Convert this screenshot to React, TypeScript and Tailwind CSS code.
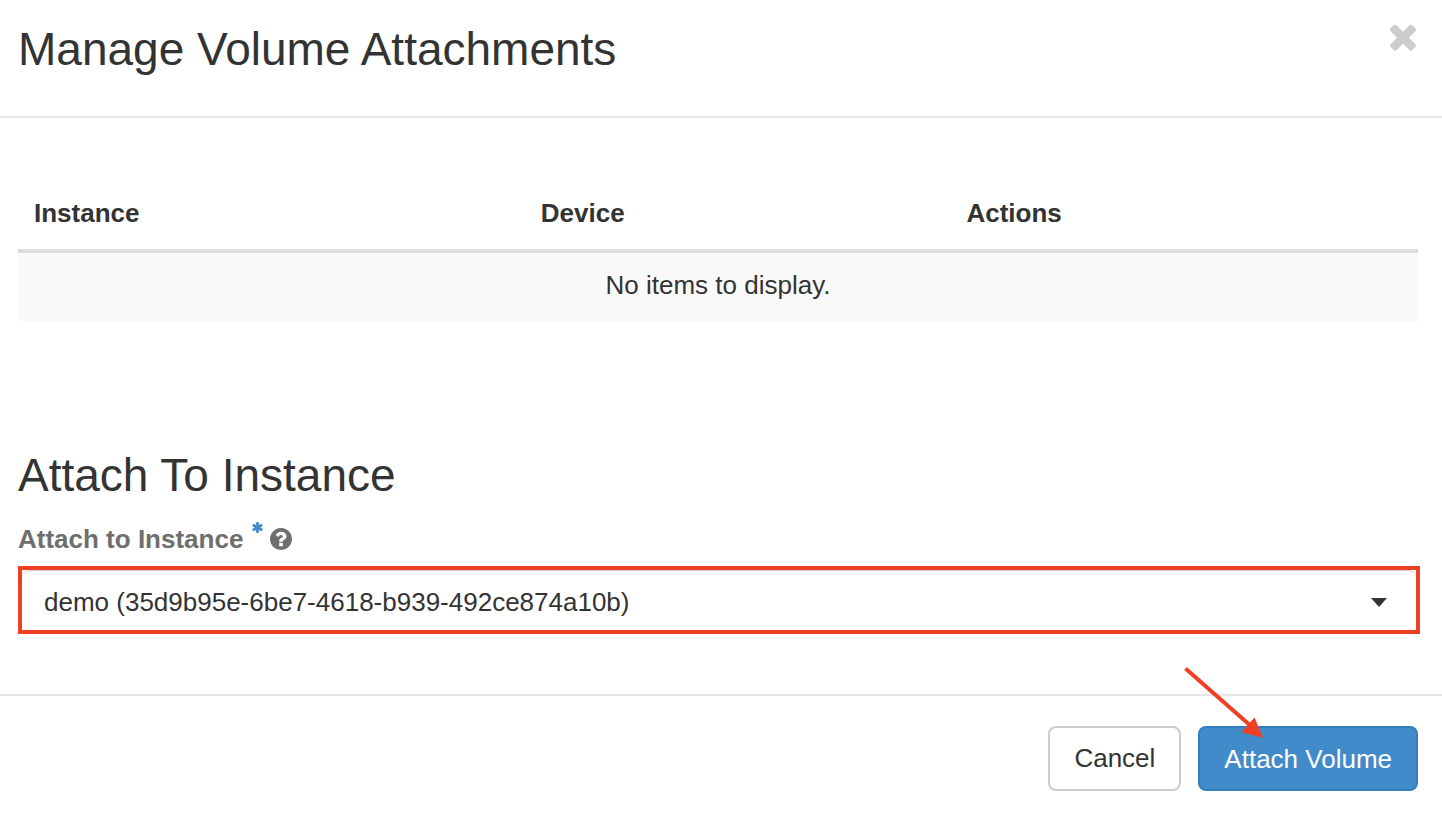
import { useState } from "react";

function CloseIcon() {
  return (
    <svg viewBox="302 302 1188 1252" className="h-7 w-[26px] fill-current" aria-hidden="true">
      <path d="M1490 1322q0 40-28 68l-136 136q-28 28-68 28t-68-28l-294-294-294 294q-28 28-68 28t-68-28l-136-136q-28-28-28-68t28-68l294-294-294-294q-28-28-28-68t28-68l136-136q28-28 68-28t68 28l294 294 294-294q28-28 68-28t68 28l136 136q28 28 28 68t-28 68l-294 294 294 294q28 28 28 68z" />
    </svg>
  );
}

function AsteriskIcon() {
  return (
    <svg viewBox="0 0 1792 1792" className="h-[13px] w-[13px] fill-[#428bca]" aria-hidden="true">
      <path d="M1546 1050q46 26 59.5 77.5t-12.5 97.5l-64 110q-26 46-77.5 59.5t-97.5-12.5l-266-153v307q0 52-38 90t-90 38h-128q-52 0-90-38t-38-90v-307l-266 153q-46 26-97.5 12.5t-77.5-59.5l-64-110q-26-46-12.5-97.5t59.5-77.5l266-154-266-154q-46-26-59.5-77.5t12.5-97.5l64-110q26-46 77.5-59.5t97.5 12.5l266 153v-307q0-52 38-90t90-38h128q52 0 90 38t38 90v307l266-153q46-26 97.5-12.5t77.5 59.5l64 110q26 46 12.5 97.5t-59.5 77.5l-266 154z" />
    </svg>
  );
}

function HelpIcon() {
  return (
    <svg viewBox="128 128 1536 1536" className="h-[22px] w-[22px] fill-[#6e6e6e]" aria-hidden="true">
      <path d="M1024 1376v-192q0-14-9-23t-23-9h-192q-14 0-23 9t-9 23v192q0 14 9 23t23 9h192q14 0 23-9t9-23zm256-672q0-88-55.5-163t-138.5-116-170.5-41q-243 0-371 213-15 24 8 42l132 100q7 6 19 6 16 0 25-12 53-68 86-92 34-24 86-24 48 0 85.5 26t37.5 59q0 38-20 61t-68 45q-63 28-115.5 86.5t-52.5 125.5v36q0 14 9 23t23 9h192q14 0 23-9t9-23q0-19 21.5-49.5t54.5-49.5q32-18 49-28.5t46-35 44.5-48 28-60.5 12.5-81zm384 192q0 209-103 385.5t-279.5 279.5-385.5 103-385.5-103-279.5-279.5-103-385.5 103-385.5 279.5-279.5 385.5-103 385.5 103 279.5 279.5 103 385.5z" />
    </svg>
  );
}

export default function App() {
  const [instance, setInstance] = useState("35d9b95e-6be7-4618-b939-492ce874a10b");

  return (
    <div className="min-h-screen bg-white font-['Liberation_Sans',Arial,sans-serif] text-[26px] leading-9 text-[#333]">
      <header className="flex items-start justify-between border-b-2 border-[#e5e5e5] pt-[23px] pr-[26px] pb-[41px] pl-[18px]">
        <h1 className="text-[46px] leading-[52px]">Manage Volume Attachments</h1>
        <button type="button" aria-label="Close" className="text-[#ccc]">
          <CloseIcon />
        </button>
      </header>

      <main>
        <div className="pt-[77px] pr-6 pl-[18px]">
          <table className="w-full table-fixed">
            <thead>
              <tr className="border-b-4 border-[#ddd] text-left">
                <th className="w-[36.2%] px-4 pb-[18px]">Instance</th>
                <th className="w-[30.4%] px-4 pb-[18px]">Device</th>
                <th className="px-4 pb-[18px]">Actions</th>
              </tr>
            </thead>
            <tbody>
              <tr className="bg-[#f9f9f9]">
                <td colSpan={3} className="px-4 pt-[14px] pb-[18px] text-center">
                  No items to display.
                </td>
              </tr>
            </tbody>
          </table>
        </div>

        <form className="pt-32 pr-[22px] pb-[60px] pl-[18px]">
          <h2 className="text-[46px] leading-[52px]">Attach To Instance</h2>
          <div className="mt-5 flex items-center">
            <label htmlFor="instance" className="flex items-center gap-2 font-bold text-[#6e6e6e]">
              Attach to Instance
              <span className="self-start">
                <AsteriskIcon />
              </span>
            </label>
            <span className="ml-1.5">
              <HelpIcon />
            </span>
          </div>
          <div className="relative mt-[9px] border-4 border-[#ee4023]">
            <select
              id="instance"
              value={instance}
              onChange={(e) => setInstance(e.target.value)}
              className="block h-[60px] w-full appearance-none rounded-t-lg border-t border-[#ccc] bg-white pt-0.5 pr-14 pl-[22px]"
            >
              <option value="35d9b95e-6be7-4618-b939-492ce874a10b">
                demo (35d9b95e-6be7-4618-b939-492ce874a10b)
              </option>
            </select>
            <svg
              viewBox="0 0 16 9"
              className="pointer-events-none absolute top-7 right-[29px] h-[9px] w-4 fill-[#333]"
              aria-hidden="true"
            >
              <path d="M0 0h16L8 9z" />
            </svg>
          </div>
        </form>
      </main>

      <footer className="flex justify-end gap-[17px] border-t-2 border-[#e5e5e5] pt-[30px] pr-6 pb-6 pl-[18px]">
        <button type="button" className="rounded-lg border-2 border-[#ccc] bg-white px-6 pt-3 pb-[13px]">
          Cancel
        </button>
        <div className="relative">
          <button
            type="button"
            className="rounded-lg border-2 border-[#357ebd] bg-[#428bca] px-6 pt-[13px] pb-3 text-white"
          >
            Attach Volume
          </button>
          <svg
            viewBox="0 0 90 84"
            className="pointer-events-none absolute -top-[66px] -left-[18px] h-[84px] w-[90px]"
            aria-hidden="true"
          >
            <path d="M5.500 8.500L72 67" stroke="#ee4023" strokeWidth="4" fill="none" />
            <path d="M83 78L74.500 57.500L61.500 72z" fill="#ee4023" />
          </svg>
        </div>
      </footer>
    </div>
  );
}
